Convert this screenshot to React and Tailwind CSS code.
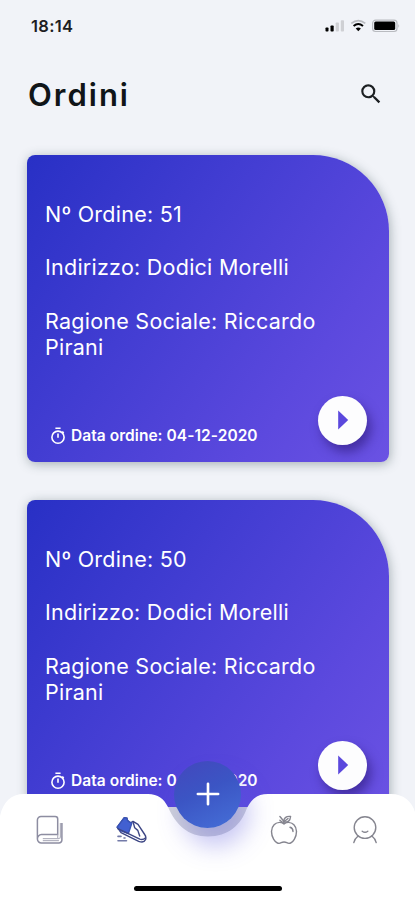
import React from "react";

const orders = [
  { id: 51, address: "Dodici Morelli", customer: "Riccardo Pirani", date: "04-12-2020" },
  { id: 50, address: "Dodici Morelli", customer: "Riccardo Pirani", date: "04-12-2020" },
];

const StatusBar = () => (
  <div className="flex h-[52px] items-center justify-between pl-[31px] pr-[15px]">
    <span className="text-[16.5px] font-semibold tracking-[0.3px] text-[#1d1e22]">18:14</span>
    <svg width="75" height="14" viewBox="0 0 75 14">
      <rect x="0.5" y="8.5" width="3" height="4" rx="0.8" fill="#000" />
      <rect x="5.5" y="6.5" width="3.2" height="6" rx="0.8" fill="#000" />
      <rect x="10.7" y="3.5" width="3.2" height="9" rx="0.8" fill="#cfd0d4" />
      <rect x="15.8" y="1.2" width="3.2" height="11.3" rx="0.8" fill="#cfd0d4" />
      <path d="M26.3 4.4Q33.3 -1.3 40.3 4.4" fill="none" stroke="#b9bbc0" strokeWidth="1.7" />
      <path d="M28.6 7Q33.3 3.1 38 7" fill="none" stroke="#000" strokeWidth="2" />
      <path d="M30.7 9.4Q33.3 7.4 35.9 9.4L33.3 12.3Z" fill="#000" />
      <rect x="47.6" y="1.2" width="24.4" height="11.3" rx="3" fill="none" stroke="#b9bbc0" strokeWidth="1.2" />
      <rect x="49.2" y="2.6" width="21" height="8.4" rx="1.5" fill="#000" />
      <path d="M73.3 4.8Q75 6.8 73.3 9Z" fill="#b9bbc0" />
    </svg>
  </div>
);

const Header = () => (
  <div className="flex h-[103px] items-start justify-between pl-[28px] pr-[31px] pt-[20px]">
    <h1 className="text-[31px] leading-[45px] font-semibold tracking-[2px] text-[#101518]">Ordini</h1>
    <button className="mt-[9px]">
      <svg width="26" height="26" viewBox="0 0 24 24" fill="#1c1f22">
        <path d="M15.5 14h-.79l-.28-.27A6.47 6.47 0 0 0 16 9.5 6.5 6.5 0 1 0 9.5 16c1.61 0 3.09-.59 4.23-1.57l.27.28v.79l5 4.99L20.49 19l-4.99-5zm-6 0C7.01 14 5 11.99 5 9.5S7.01 5 9.5 5 14 7.01 14 9.5 11.99 14 9.5 14z" />
      </svg>
    </button>
  </div>
);

const TimerIcon = () => (
  <svg width="16" height="18" viewBox="0 0 16 18" fill="none" stroke="#fff" strokeWidth="1.6">
    <circle cx="8" cy="10.2" r="6.1" />
    <path d="M5.4 1.3h5.2M8 6.4v4.3M12.2 4.6l1.6 1.2" />
  </svg>
);

const OrderCard = ({ order }) => (
  <div className="flex h-[307px] flex-col rounded-[8px] rounded-tr-[76px] bg-[linear-gradient(125deg,#2830c5_0%,#423dd2_38%,#5c49de_75%,#6a52e3_100%)] pl-[18px] pr-[22px] pt-[46px] text-white shadow-[1px_2px_11px_rgba(60,80,85,0.42)]">
    <div className="flex flex-col gap-[27px] text-[21.5px] leading-[26.4px] tracking-[0.25px]">
      <p>Nº Ordine: {order.id}</p>
      <p>Indirizzo: {order.address}</p>
      <p className="w-[290px]">Ragione Sociale: {order.customer}</p>
    </div>
    <div className="mt-[35px] flex items-start justify-between">
      <div className="mt-[30px] flex items-center gap-[5px] pl-[5px]">
        <TimerIcon />
        <span className="text-[15.5px] leading-[20px] font-semibold tracking-[0.05px]">Data ordine: {order.date}</span>
      </div>
      <button className="flex size-[49px] items-center justify-center rounded-full bg-[#fdfdfe] shadow-[4px_7px_11px_rgba(40,20,110,0.55)]">
        <svg width="12" height="20" viewBox="0 0 12 20">
          <path d="M1.2 0.5L11.2 10L1.2 19.5Z" fill="#5b48dd" />
        </svg>
      </button>
    </div>
  </div>
);

const BookIcon = () => (
  <svg width="28" height="30" viewBox="0 0 28 30" fill="none" stroke="#8d8da1" strokeWidth="1.5">
    <path d="M1.4 24V5a3.6 3.6 0 0 1 3.6-3.6h14.2a2.5 2.5 0 0 1 2.5 2.5v15.7H5.5A4.1 4.1 0 0 0 1.4 24a4 4 0 0 0 4.1 4h17.4a3 3 0 0 0 3-3V8" />
    <path d="M24.4 8v14a1.5 1.5 0 0 1-1.5 1.5H6.8M21.7 19.8v3.4" stroke="#b3b3c0" strokeWidth="1.2" />
    <path d="M6.8 25.5h16.1" stroke="#b3b3c0" strokeWidth="1.4" />
  </svg>
);

const ShoeIcon = () => (
  <svg width="31" height="28" viewBox="0 0 31 28" fill="none" stroke="#3d4684" strokeWidth="1.4" strokeLinejoin="round" strokeLinecap="round">
    <path d="M8.3 1.6L1.2 11.2L5 16.7L22.7 25.3Q28.1 27.2 29.6 23.6Q30.4 20.8 28.7 18.5L22 8.4L17 5.4L14.7 6.9Q10.8 5.4 11 2.3Z" fill="#fff" />
    <path d="M8.3 1.6L1.2 11.2L4.3 14.6L12.4 17.6L15.8 7.2Q10.8 5.4 11 2.3Z" fill="#4260d1" stroke="#3853b5" />
    <path d="M2 12.8L5.6 14.3L23.8 23.2Q27 24.3 29.4 22M17 5.6L18.7 11.7L21.8 14.4L23.7 20" />
    <path d="M2 20.4h3M2 24.8h8.5M8 22h1" stroke="#737aa8" strokeWidth="1.6" />
  </svg>
);

const AppleIcon = () => (
  <svg width="28" height="30" viewBox="0 0 28 30" fill="none" stroke="#85858f" strokeWidth="1.4" strokeLinecap="round" strokeLinejoin="round">
    <path d="M14 8.8C10.8 6.9 6.6 7.2 4.1 9.7C.6 13.2.8 19.5 3.7 24.4C5.9 28.2 8.8 29.1 11.2 27.7Q14 26.3 16.8 27.7C19.2 29.1 22.2 28.2 24.3 24.4C27.2 19.5 27.4 13.2 23.9 9.7C21.4 7.2 17.2 6.9 14 8.8Z" />
    <path d="M14 8.8Q13.8 5.3 9.9 1.5M14 6.9C13.2 3.2 16.2 1 20.6 1.5C20.2 5.7 17.9 7.8 14 6.9ZM14 6.8L18 3.5M9.9 5.2L12.2 7.3M20 12.3Q23 13 23 16.6" />
  </svg>
);

const UserIcon = () => (
  <svg width="26" height="30" viewBox="0 0 26 30" fill="none" stroke="#85858f" strokeWidth="1.4" strokeLinecap="round">
    <circle cx="13" cy="12.6" r="10.8" />
    <path d="M1.8 27.6Q2.9 23.4 6.1 21M24.2 27.6Q23.1 23.4 19.9 21" />
    <path d="M10.2 16.2Q13 18.3 15.8 16.2" />
  </svg>
);

const BottomNav = () => (
  <nav className="absolute inset-x-0 bottom-0 h-[106px]">
    <svg className="absolute inset-0" width="415" height="106" viewBox="0 0 415 106">
      <path d="M167 13H250V50H167Z" fill="#d0d2da" />
      <path d="M0 106V22C3 8 11 0 24 0H148C158 0 164 5 168 13C176 31 188 42.5 208 42.5C228 42.5 241 31 247 14C252 4 258 0 268 0H391C404 0 412 8 415 18V106Z" fill="#fff" />
    </svg>
    <div className="absolute left-[174px] top-[-33px] flex size-[67px] items-center justify-center rounded-full bg-[linear-gradient(155deg,#4347bd_0%,#3b55c4_45%,#4670d8_100%)] shadow-[8px_18px_24px_rgba(90,85,222,0.35)]">
      <svg className="-mt-px" width="24" height="24" viewBox="0 0 22 22" stroke="#fff" strokeWidth="2.4" strokeLinecap="round">
        <path d="M11 1.7v18.6M1.7 11h18.6" />
      </svg>
    </div>
    <div className="relative flex items-center pl-[36px] pt-[21px]">
      <BookIcon />
      <div className="ml-[52px]"><ShoeIcon /></div>
      <div className="ml-[123px]"><AppleIcon /></div>
      <div className="ml-[54px]"><UserIcon /></div>
    </div>
    <div className="absolute bottom-[9px] left-[134px] h-[5px] w-[148px] rounded-full bg-black" />
  </nav>
);

const App = () => {
  return (
    <div className="relative h-[900px] w-[415px] overflow-hidden bg-[#f1f3f8] font-['Inter',sans-serif]">
      <StatusBar />
      <Header />
      <div className="flex flex-col gap-[38px] pl-[27px] pr-[26px]">
        {orders.map((order) => (
          <OrderCard key={order.id} order={order} />
        ))}
      </div>
      <BottomNav />
    </div>
  );
};

export default App;
